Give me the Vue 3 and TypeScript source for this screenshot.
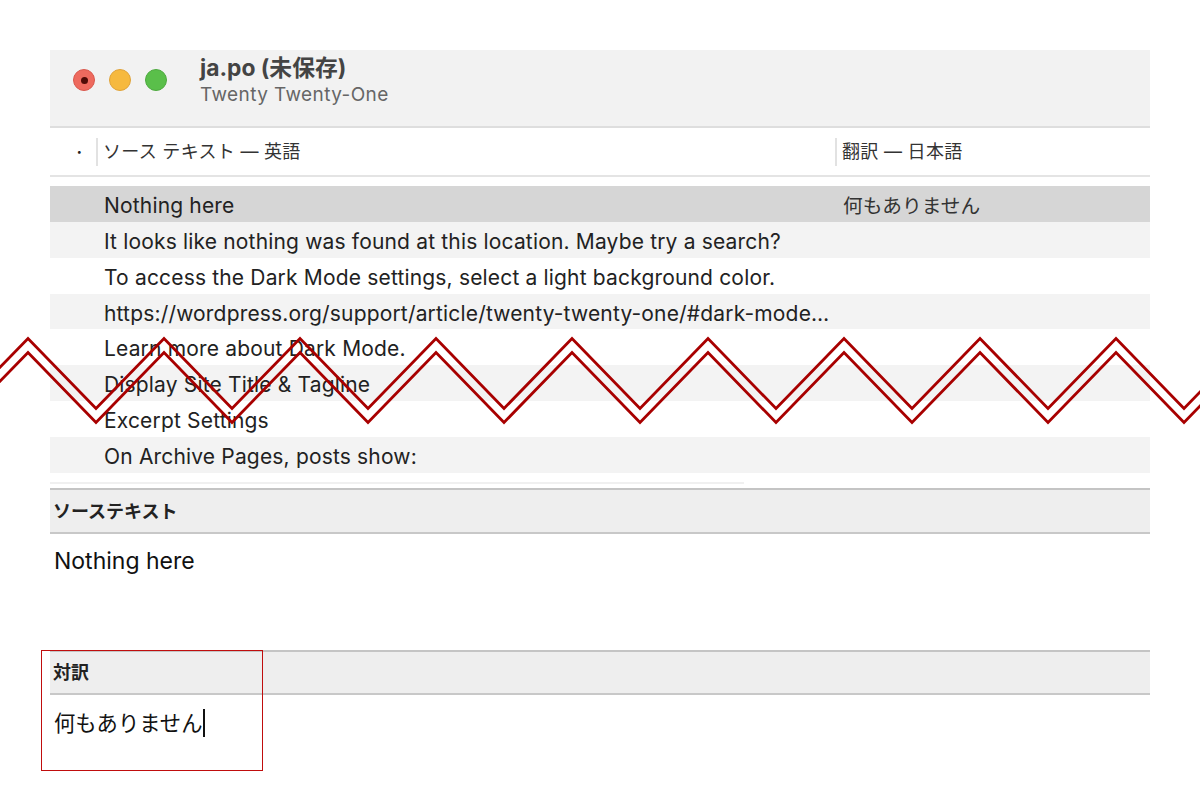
<script setup lang="ts">
interface Row { source: string; target: string }
const rows: Row[] = [
  { source: 'Nothing here', target: '何もありません' },
  { source: 'It looks like nothing was found at this location. Maybe try a search?', target: '' },
  { source: 'To access the Dark Mode settings, select a light background color.', target: '' },
  { source: 'https://wordpress.org/support/article/twenty-twenty-one/#dark-mode…', target: '' },
  { source: 'Learn more about Dark Mode.', target: '' },
  { source: 'Display Site Title & Tagline', target: '' },
  { source: 'Excerpt Settings', target: '' },
  { source: 'On Archive Pages, posts show:', target: '' },
]
const periods = Array.from({ length: 11 }, (_, i) => i)
const zig = (offset: number): string => {
  const pts: string[] = []
  for (const i of periods) {
    const x = -40 + i * 136
    pts.push(`${x},${408.5 + offset}`, `${x + 68},${338.5 + offset}`)
  }
  return pts.join(' ')
}
</script>

<template>
  <div class="page">
    <div class="window">
      <header class="titlebar">
        <div class="lights">
          <span class="light red"><i></i></span>
          <span class="light yellow"></span>
          <span class="light green"></span>
        </div>
        <div class="titles">
          <div class="title">ja.po (未保存)</div>
          <div class="subtitle">Twenty Twenty-One</div>
        </div>
      </header>
      <div class="columns">
        <div class="col-dot">•</div>
        <div class="col-source">ソース テキスト — 英語</div>
        <div class="col-target">翻訳 — 日本語</div>
      </div>
      <div class="rows">
        <div v-for="(r, i) in rows" :key="i" class="row" :class="{ selected: i === 0, odd: i % 2 === 1 }">
          <div class="cell-source">{{ r.source }}</div>
          <div class="cell-target">{{ r.target }}</div>
        </div>
      </div>
      <div class="scroll"></div>
      <section class="pane source-pane">
        <div class="pane-head">ソーステキスト</div>
        <div class="pane-body">Nothing here</div>
      </section>
      <section class="pane">
        <div class="pane-head short">対訳</div>
        <div class="pane-body jp">何もありません<span class="caret"></span></div>
      </section>
    </div>
    <svg class="zigzag" width="1200" height="800" viewBox="0 0 1200 800" aria-hidden="true">
      <polyline :points="zig(0)" />
      <polyline :points="zig(14)" />
    </svg>
    <div class="highlight"></div>
  </div>
</template>

<style>
html, body { margin: 0; background: #fff; }
</style>

<style scoped>
.page {
  position: relative;
  width: 1200px;
  height: 800px;
  overflow: hidden;
  background: #fff;
  font-family: Inter, "Noto Sans CJK JP", sans-serif;
  color: #222;
}
.window {
  padding: 50px 50px 0;
  display: flex;
  flex-direction: column;
}
.titlebar {
  height: 76px;
  background: #f2f2f2;
  border-bottom: 2px solid #dedede;
  display: flex;
}
.lights {
  display: flex;
  gap: 14px;
  padding: 19px 0 0 23px;
  width: 150px;
  box-sizing: border-box;
}
.light {
  width: 22px;
  height: 22px;
  border-radius: 50%;
  box-sizing: border-box;
  border: 1px solid;
  display: flex;
  align-items: center;
  justify-content: center;
}
.light i {
  width: 7px;
  height: 7px;
  border-radius: 50%;
  background: #4f0b06;
}
.red { background: #ee6a5e; border-color: #d9584d; }
.yellow { background: #f6b93f; border-color: #e0a33a; }
.green { background: #5abf4a; border-color: #4eaa40; }
.titles {
  padding-top: 4px;
}
.title {
  font-size: 22.8px;
  line-height: 28px;
  font-weight: 700;
  color: #444;
}
.subtitle {
  font-size: 19px;
  line-height: 25px;
  letter-spacing: 0.4px;
  color: #666;
}
.columns {
  height: 47px;
  display: grid;
  grid-template-columns: 46px 739px 1fr;
  align-items: center;
  border-bottom: 2px solid #e4e4e4;
  font-size: 18px;
  letter-spacing: 0.3px;
  color: #333;
}
.col-dot {
  text-align: center;
  padding-left: 13px;
  font-size: 9px;
  color: #222;
}
.col-source, .col-target {
  height: 28px;
  line-height: 28px;
  border-left: 2px solid #e2e2e2;
  padding-left: 5px;
}
.rows {
  margin-top: 9px;
}
.row {
  height: 35.86px;
  display: grid;
  grid-template-columns: 54px 739px 1fr;
  align-items: center;
  font-size: 21px;
  letter-spacing: 0.17px;
  line-height: 38px;
  color: #222;
}
.row::before { content: ""; }
.row.odd { background: #f3f3f3; }
.row.selected { background: #d6d6d6; }
.cell-source {
  white-space: nowrap;
  padding-top: 1px;
}
.cell-target {
  font-size: 19.7px;
  letter-spacing: 0;
  color: #333;
}
.scroll {
  height: 2px;
  width: 694px;
  margin-top: 9px;
  background: #f0f0f0;
}
.source-pane {
  margin-top: 4px;
}
.pane {
  display: flex;
  flex-direction: column;
}
.pane-head {
  height: 42px;
  line-height: 44px;
  background: #eee;
  border-top: 2px solid #c4c4c4;
  border-bottom: 2px solid #c8c8c8;
  padding-left: 3px;
  font-size: 18px;
  font-weight: 700;
  color: #222;
}
.pane-head.short { height: 41px; line-height: 41px; }
.source-pane .pane-body { height: 116px; padding-top: 11px; }
.pane-body {
  padding: 10px 0 0 4px;
  box-sizing: border-box;
  height: 80px;
  font-size: 23px;
  line-height: 32px;
  color: #111;
}
.pane-body.jp { padding-top: 12px; font-size: 21.3px; }
.caret {
  display: inline-block;
  width: 2px;
  height: 28px;
  margin-left: 1px;
  background: #111;
  vertical-align: -6px;
}
.zigzag {
  position: absolute;
  inset: 0;
  pointer-events: none;
}
.zigzag polyline {
  fill: none;
  stroke: #a80000;
  stroke-width: 2.8;
}
.highlight {
  position: absolute;
  left: 41px;
  top: 650px;
  width: 222px;
  height: 121px;
  box-sizing: border-box;
  border: 1px solid #c00d0d;
}
</style>
